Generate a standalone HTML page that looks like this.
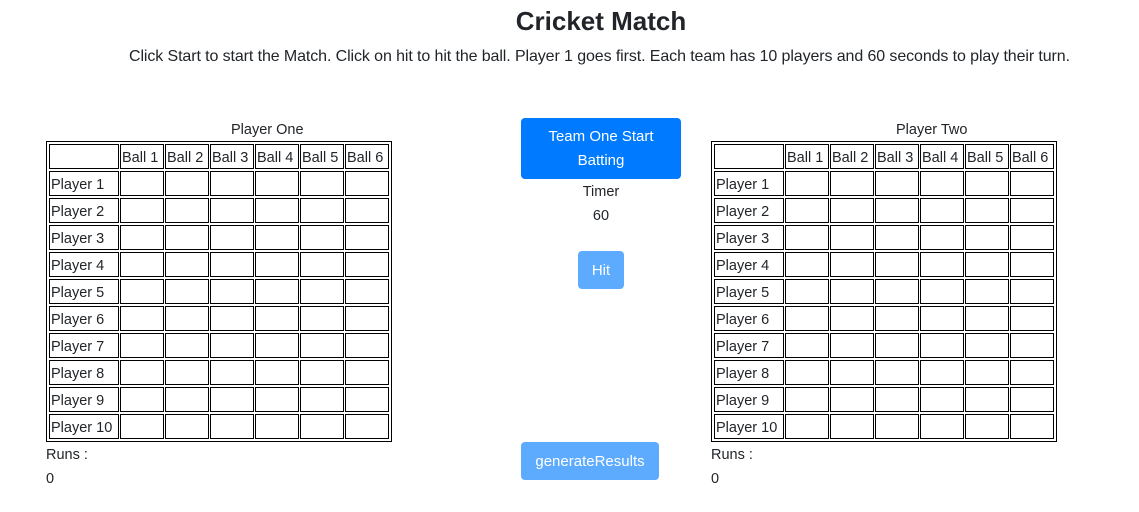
<!DOCTYPE html>
<html><head><meta charset="utf-8"><style>
body{margin:0;width:1139px;height:512px;background:#fff;font-family:"Liberation Sans",sans-serif;color:#212529;position:relative;overflow:hidden}
.a{position:absolute;white-space:nowrap}
h1{position:absolute;margin:0;top:6px;left:0;width:1202px;text-align:center;font-size:26px;font-weight:bold}
table{position:absolute;border:1px solid #000;border-spacing:1px 2px;padding:0 1px;border-collapse:separate;table-layout:fixed;width:345px;box-sizing:border-box}
td{border:1px solid #000;padding:2px 0 0 1px;height:25px;box-sizing:border-box;font-size:14.5px;overflow:hidden;white-space:nowrap;line-height:20px}
td.f{width:70px}td.b{width:44px}
.btn{position:absolute;color:#fff;border-radius:4px;text-align:center;font-size:15px}
</style></head><body>
<h1>Cricket Match</h1>
<div class="a" style="left:129px;top:48px;font-size:16px;letter-spacing:-0.1px">Click Start to start the Match. Click on hit to hit the ball. Player 1 goes first. Each team has 10 players and 60 seconds to play their turn.</div>
<div class="a" style="left:231px;top:122px;font-size:14.5px">Player One</div>
<div class="a" style="left:896px;top:122px;font-size:14.5px">Player Two</div>
<table style="left:46px;top:141px" id="t1"></table>
<table style="left:711px;top:141px" id="t2"></table>
<div class="a" style="left:46px;top:447px;font-size:14.5px">Runs :</div>
<div class="a" style="left:46px;top:471px;font-size:14.5px">0</div>
<div class="a" style="left:711px;top:447px;font-size:14.5px">Runs :</div>
<div class="a" style="left:711px;top:471px;font-size:14.5px">0</div>
<div class="btn" style="left:521px;top:118px;width:160px;height:61px;background:#007bff;line-height:24px;padding-top:7px;box-sizing:border-box">Team One Start<br>Batting</div>
<div class="a" style="left:521px;top:184px;width:160px;text-align:center;font-size:14.5px">Timer</div>
<div class="a" style="left:521px;top:208px;width:160px;text-align:center;font-size:14.5px">60</div>
<div class="btn" style="left:578px;top:251px;width:46px;height:38px;line-height:39px;background:#5cabff">Hit</div>
<div class="btn" style="left:521px;top:442px;width:138px;height:38px;line-height:39px;background:#5cabff">generateResults</div>
<script>
for(const id of ['t1','t2']){let h='<tr><td class="f"></td>';for(let j=1;j<=6;j++)h+='<td class="b">Ball '+j+'</td>';h+='</tr>';
for(let i=1;i<=10;i++){h+='<tr><td class="f">Player '+i+'</td>'+'<td class="b"></td>'.repeat(6)+'</tr>'}
document.getElementById(id).innerHTML=h;}
</script>
</body></html>
